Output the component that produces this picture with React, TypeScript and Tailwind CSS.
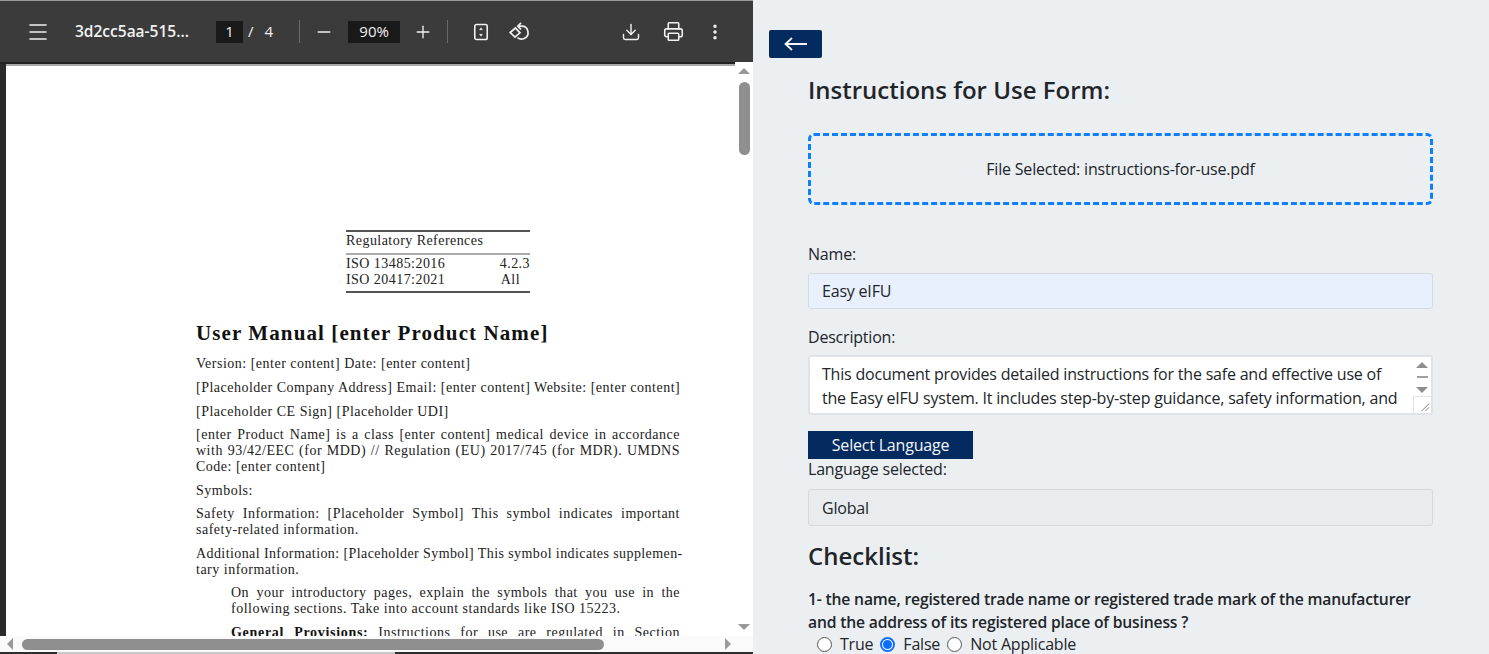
import { Download, Menu, Minus, MoreVertical, Plus, Printer } from 'lucide-react';

const serif = "font-['Liberation_Serif',serif]";
const ui = "font-['Open_Sans',sans-serif]";

function FitIcon() {
  return (
    <svg viewBox="0 0 18 20" className="h-[18px] w-[16px]" fill="none" stroke="#f1f1f1" strokeWidth="1.8">
      <rect x="2" y="1.5" width="14" height="17" rx="2" />
      <path d="M9 5.2 7.4 7.4h3.2L9 5.2ZM9 14.8l-1.6-2.2h3.2L9 14.8Z" fill="#f1f1f1" strokeWidth="0.6" />
    </svg>
  );
}

function RotateIcon() {
  return (
    <svg viewBox="0 0 22 20" className="h-[20px] w-[22px]" fill="none" stroke="#f1f1f1" strokeWidth="1.7">
      <path d="M2.2 10.5 7.4 6l4.6 4.8-5 4.4-4.8-4.7Z" />
      <path d="M10.4 4.2h3.2a6.4 6.4 0 0 1 2.5 12.3 6.4 6.4 0 0 1-6.6-.8" />
      <path d="M13 .9 9.8 4.2 13 7.4" />
    </svg>
  );
}

function Toolbar() {
  return (
    <div className={`flex h-[62px] shrink-0 items-center border-t border-[#9a9a9a] bg-[#3b3b3b] text-[#f1f1f1] ${ui}`}>
      <Menu className="ml-[26px] h-[24px] w-[24px]" strokeWidth={1.6} />
      <span className="ml-[25px] w-[120px] text-[15.5px] font-semibold whitespace-nowrap">3d2cc5aa-515...</span>
      <span className="ml-[21px] flex h-[22px] w-[27px] items-center justify-center bg-[#191919] text-[15px]">1</span>
      <span className="ml-[5px] text-[15px]">/</span>
      <span className="ml-[11px] text-[15px]">4</span>
      <span className="ml-[26px] h-[23px] w-px bg-[#6a6a6a]" />
      <Minus className="ml-[14px] h-[20px] w-[20px]" strokeWidth={1.6} />
      <span className="ml-[14px] flex h-[22px] w-[52px] items-center justify-center bg-[#191919] text-[15px]">90%</span>
      <Plus className="ml-[13px] h-[20px] w-[20px]" strokeWidth={1.6} />
      <span className="ml-[14px] h-[23px] w-px bg-[#6a6a6a]" />
      <span className="ml-[25px] flex"><FitIcon /></span>
      <span className="ml-[19px] flex"><RotateIcon /></span>
      <Download className="ml-[91px] h-[20px] w-[20px]" strokeWidth={1.7} />
      <Printer className="ml-[22px] h-[21px] w-[21px]" strokeWidth={1.8} />
      <MoreVertical className="ml-[21px] h-[20px] w-[20px]" strokeWidth={2.2} />
    </div>
  );
}

// one justified line of the PDF, the breaks are the ones LaTeX made
function Line({ children }: { children: React.ReactNode }) {
  return <div className="text-justify whitespace-nowrap [text-align-last:justify]">{children}</div>;
}

function PdfPage() {
  return (
    <div className={`min-w-0 flex-1 overflow-hidden border-t-[2px] border-[#a9a9a9] bg-white pl-[190px] text-[14px] leading-[16px] tracking-[0.5px] text-[#222] ${serif}`}>
      <div className="ml-[150px] mt-[164px] w-[184px] tracking-[0.45px]">
        <div className="border-t-[2px] border-b-[2px] border-t-[#555] border-b-[#aaa] pt-[1px] pb-[4px]">Regulatory References</div>
        <div className="flex justify-between pt-[1px]"><span>ISO 13485:2016</span><span>4.2.3</span></div>
        <div className="flex justify-between border-b-[2px] border-[#555] pb-[3px]"><span>ISO 20417:2021</span><span className="mr-[10px]">All</span></div>
      </div>
      <h1 className="mt-[27px] text-[21px] leading-[26px] font-bold tracking-[1.1px] whitespace-nowrap text-[#111]">User Manual [enter Product Name]</h1>
      <div className="w-[484px]">
        <p className="mt-[10px]">Version: [enter content] Date: [enter content]</p>
        <p className="mt-[8px] whitespace-nowrap">[Placeholder Company Address] Email: [enter content] Website: [enter content]</p>
        <p className="mt-[8px]">[Placeholder CE Sign] [Placeholder UDI]</p>
        <div className="mt-[7px]">
          <Line>[enter Product Name] is a class [enter content] medical device in accordance</Line>
          <Line>with 93/42/EEC (for MDD) // Regulation (EU) 2017/745 (for MDR). UMDNS</Line>
          <div>Code: [enter content]</div>
        </div>
        <p className="mt-[8px]">Symbols:</p>
        <div className="mt-[7px]">
          <Line>Safety Information: [Placeholder Symbol] This symbol indicates important</Line>
          <div>safety-related information.</div>
        </div>
        <p className="mt-[8px] tracking-[0.41px] whitespace-nowrap">Additional Information: [Placeholder Symbol] This symbol indicates supplemen-</p>
        <p>tary information.</p>
        <div className="mt-[7px] ml-[35px]">
          <Line>On your introductory pages, explain the symbols that you use in the</Line>
          <div className="whitespace-nowrap">following sections. Take into account standards like ISO 15223.</div>
        </div>
        <div className="mt-[8px] ml-[35px]">
          <Line><b className="font-bold tracking-[0.7px] text-[#111]">General Provisions:</b> Instructions for use are regulated in Section</Line>
        </div>
      </div>
    </div>
  );
}

function PdfViewer() {
  return (
    <div className="flex h-full w-[753px] shrink-0 flex-col">
      <Toolbar />
      <div className="flex min-h-0 flex-1">
        <div className="flex min-w-0 flex-1 flex-col">
          <div className="h-[2px] shrink-0 bg-[#222]" />
          <div className="flex min-h-0 flex-1">
            <div className="w-[6px] shrink-0 bg-[#2a2a2a]" />
            <PdfPage />
          </div>
        </div>
        {/* vertical scrollbar */}
        <div className="flex w-[18px] shrink-0 flex-col items-center bg-white">
          <div className="mt-[6px] h-0 w-0 border-x-[6px] border-b-[6px] border-x-transparent border-b-[#999]" />
          <div className="mt-[8px] h-[73px] w-[11px] rounded-full bg-[#8f8f8f]" />
          <div className="mt-auto mb-[6px] h-0 w-0 border-x-[6px] border-t-[6px] border-x-transparent border-t-[#999]" />
        </div>
      </div>
      {/* horizontal scrollbar */}
      <div className="flex h-[16px] shrink-0 items-center bg-[#fafafa]">
        <div className="ml-[7px] h-0 w-0 border-y-[6px] border-r-[6px] border-y-transparent border-r-[#999]" />
        <div className="ml-[9px] h-[11px] w-[582px] rounded-full bg-[#8f8f8f]" />
        <div className="ml-[121px] h-0 w-0 border-y-[6px] border-l-[6px] border-y-transparent border-l-[#999]" />
      </div>
      <div className="flex h-[2px] shrink-0 bg-[#2d2d2d]">
        <div className="ml-[57px] w-[338px] bg-[#c9c9c9]" />
      </div>
    </div>
  );
}

function Radio({ label, checked }: { label: string; checked?: boolean }) {
  return (
    <label className="flex items-center gap-[8px]">
      {checked ? (
        <span className="flex h-[15px] w-[15px] items-center justify-center rounded-full border-[2px] border-[#0d6efd] bg-white">
          <span className="h-[9px] w-[9px] rounded-full bg-[#0d6efd]" />
        </span>
      ) : (
        <span className="h-[15px] w-[15px] rounded-full border border-[#555] bg-white" />
      )}
      <span>{label}</span>
    </label>
  );
}

function FormPanel() {
  return (
    <div className={`h-full min-w-0 flex-1 overflow-hidden bg-[#eceff2] pt-[30px] pl-[16px] text-[16px] leading-[24px] tracking-[-0.2px] text-[#212529] ${ui}`}>
      <button className="flex h-[28px] w-[53px] items-center justify-center rounded-[2px] bg-[#042b60]">
        <svg viewBox="0 0 24 14" className="h-[14px] w-[24px]" fill="none" stroke="#f4f6f9" strokeWidth="1.8">
          <path d="M1.5 7H23M8 1 1.5 7 8 13" />
        </svg>
      </button>
      <div className="ml-[39px] w-[625px]">
        <h2 className="mt-[16px] text-[24px] leading-[32px] font-semibold tracking-normal">Instructions for Use Form:</h2>
        <div className="mt-[27px] flex h-[72px] items-center justify-center rounded-[6px] border-[3px] border-dashed border-[#0d7fff]">
          File Selected: instructions-for-use.pdf
        </div>
        <div className="mt-[37px]">Name:</div>
        <div className="mt-[7px] flex h-[36px] items-center rounded-[3px] border border-[#d5dbe3] bg-[#e8f0fe] px-[13px]">Easy eIFU</div>
        <div className="mt-[16px]">Description:</div>
        <div className="relative mt-[6px] h-[60px] rounded-[3px] border-[2px] border-[#dfe3e8] bg-white pt-[5px] pl-[12px] whitespace-nowrap">
          <div>This document provides detailed instructions for the safe and effective use of</div>
          <div>the Easy eIFU system. It includes step-by-step guidance, safety information, and</div>
          {/* scroll arrows and resize grip sit over the textarea */}
          <div className="absolute top-[5px] right-0 flex w-[18px] flex-col items-center">
            <div className="h-0 w-0 border-x-[6px] border-b-[6px] border-x-transparent border-b-[#8f8f8f]" />
            <div className="mt-[8px] h-[2px] w-[11px] bg-[#a0a0a0]" />
            <div className="mt-[9px] h-0 w-0 border-x-[6px] border-t-[6px] border-x-transparent border-t-[#8f8f8f]" />
          </div>
          <svg viewBox="0 0 18 17" className="absolute right-0 bottom-0 h-[17px] w-[18px] border-t border-l border-[#e3e3e3] bg-white" stroke="#777" strokeWidth="1">
            <path d="M8 15 16 7M12 15l4-4" />
          </svg>
        </div>
        <button className="mt-[16px] block h-[28px] w-[165px] bg-[#042b60] text-center text-[#f4f6f9]">Select Language</button>
        <div className="mt-[-2px]">Language selected:</div>
        <div className="mt-[8px] flex h-[37px] items-center rounded-[3px] border border-[#d5d9de] bg-[#e9ecef] px-[13px]">Global</div>
        <h2 className="mt-[14px] text-[24px] leading-[32px] font-semibold tracking-normal">Checklist:</h2>
        <p className="mt-[16px] text-[15.7px] leading-[23px] font-semibold tracking-[-0.18px] whitespace-nowrap">
          1- the name, registered trade name or registered trade mark of the manufacturer
          <br />
          and the address of its registered place of business ?
        </p>
        <div className="mt-[-2px] ml-[9px] flex h-[24px] items-center gap-[7px] whitespace-nowrap">
          <Radio label="True" />
          <Radio label="False" checked />
          <Radio label="Not Applicable" />
        </div>
      </div>
    </div>
  );
}

export default function App() {
  return (
    <div className="flex h-[654px] w-full overflow-hidden">
      <PdfViewer />
      <FormPanel />
    </div>
  );
}
